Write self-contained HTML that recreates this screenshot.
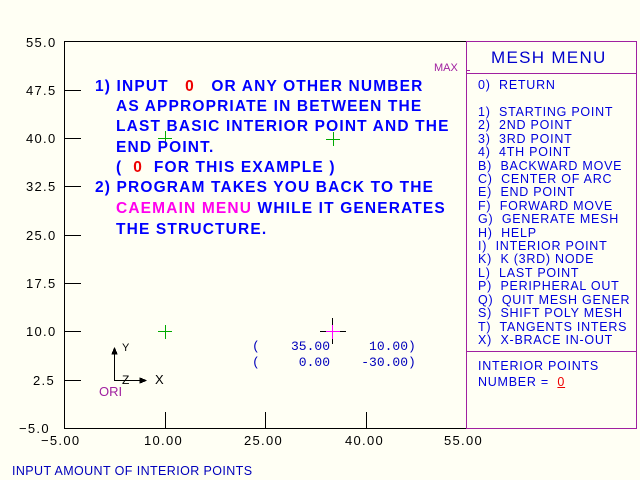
<!DOCTYPE html>
<html><head><style>
html,body{margin:0;padding:0}
body{width:640px;height:480px;background:#fffff4;position:relative;overflow:hidden;font-family:"Liberation Mono",monospace}
.t{position:absolute;white-space:pre;line-height:1}
.ax{font-family:"Liberation Sans",sans-serif;font-size:13px;color:#000;letter-spacing:1.3px}
.ins{font-family:"Liberation Sans",sans-serif;font-weight:bold;font-size:15.5px;color:#0000ff;letter-spacing:1.15px}
.m{font-family:"Liberation Sans",sans-serif;font-size:12.5px;color:#0000dd;letter-spacing:0.75px}
</style></head><body>
<svg width="640" height="480" style="position:absolute;left:0;top:0" shape-rendering="crispEdges">
<rect x="64.5" y="41.5" width="402" height="387" fill="none" stroke="#000" stroke-width="1.3"/>
<rect x="466.5" y="41.5" width="170" height="387" fill="none" stroke="#a020a0" stroke-width="1.3"/>
<line x1="466" y1="73.5" x2="637" y2="73.5" stroke="#a020a0"/>
<line x1="466" y1="351.5" x2="637" y2="351.5" stroke="#a020a0"/>
<g stroke="#000" stroke-width="1">
<line x1="64" y1="90.5" x2="81" y2="90.5"/><line x1="64" y1="138.5" x2="81" y2="138.5"/>
<line x1="64" y1="186.5" x2="81" y2="186.5"/><line x1="64" y1="235.5" x2="81" y2="235.5"/>
<line x1="64" y1="283.5" x2="81" y2="283.5"/><line x1="64" y1="331.5" x2="81" y2="331.5"/>
<line x1="64" y1="380.5" x2="81" y2="380.5"/>
<line x1="165.5" y1="412" x2="165.5" y2="428"/><line x1="265.5" y1="412" x2="265.5" y2="428"/><line x1="366.5" y1="412" x2="366.5" y2="428"/>
</g>
<g stroke="#00aa00"><line x1="158" y1="138.5" x2="172" y2="138.5"/><line x1="165.5" y1="131" x2="165.5" y2="146"/>
<line x1="326" y1="139.5" x2="340" y2="139.5"/><line x1="333.5" y1="132" x2="333.5" y2="146"/></g>
<g stroke="#00aa00"><line x1="158" y1="331.5" x2="172" y2="331.5"/><line x1="165.5" y1="325" x2="165.5" y2="339"/></g>
<g stroke="#000"><line x1="320" y1="331.5" x2="346" y2="331.5"/><line x1="332.5" y1="318" x2="332.5" y2="344"/></g>
<g stroke="#ff00ff"><line x1="326" y1="331.5" x2="340" y2="331.5"/><line x1="332.5" y1="325" x2="332.5" y2="339"/></g>
<g stroke="#000"><line x1="114.5" y1="348" x2="114.5" y2="380"/><line x1="114" y1="380.5" x2="146" y2="380.5"/>
<path d="M112 354 L114.5 348 L117 354 Z M140 378 L146 380.5 L140 383 Z" fill="#000"/></g>
<line x1="466" y1="70.5" x2="470" y2="70.5" stroke="#a020a0"/>
</svg>
<div class="t ax" style="left:26px;top:36px">55.0</div>
<div class="t ax" style="left:26px;top:84px">47.5</div>
<div class="t ax" style="left:26px;top:132px">40.0</div>
<div class="t ax" style="left:26px;top:180px">32.5</div>
<div class="t ax" style="left:26px;top:229px">25.0</div>
<div class="t ax" style="left:26px;top:277px">17.5</div>
<div class="t ax" style="left:26px;top:325px">10.0</div>
<div class="t ax" style="left:33px;top:374px">2.5</div>
<div class="t ax" style="left:19px;top:422px">−5.0</div>
<div class="t ax" style="left:41px;top:434px">−5.00</div>
<div class="t ax" style="left:144px;top:434px">10.00</div>
<div class="t ax" style="left:244px;top:434px">25.00</div>
<div class="t ax" style="left:345px;top:434px">40.00</div>
<div class="t ax" style="left:444px;top:434px">55.00</div>
<div class="t" style="left:434px;top:63px;font-family:'Liberation Sans',sans-serif;font-size:11px;color:#a020a0">MAX</div>
<div class="t ins" style="left:95px;top:79px">1) INPUT   <span style="color:#ee0000">0</span>   OR ANY OTHER NUMBER</div>
<div class="t ins" style="left:116px;top:99px">AS APPROPRIATE IN BETWEEN THE</div>
<div class="t ins" style="left:116px;top:119px">LAST BASIC INTERIOR POINT AND THE</div>
<div class="t ins" style="left:116px;top:140px">END POINT.</div>
<div class="t ins" style="left:116px;top:160px">(  <span style="color:#ee0000">0</span>  FOR THIS EXAMPLE )</div>
<div class="t ins" style="left:95px;top:180px">2) PROGRAM TAKES YOU BACK TO THE</div>
<div class="t ins" style="left:116px;top:201px"><span style="color:#ff00ee">CAEMAIN MENU</span> WHILE IT GENERATES</div>
<div class="t ins" style="left:116px;top:222px">THE STRUCTURE.</div>
<div class="t" style="left:252px;top:340px;font-family:'Liberation Mono',monospace;font-size:13px;color:#0000bb">(    35.00     10.00)</div>
<div class="t" style="left:252px;top:356px;font-family:'Liberation Mono',monospace;font-size:13px;color:#0000bb">(     0.00    -30.00)</div>
<div class="t" style="left:122px;top:343px;font-family:'Liberation Sans',sans-serif;font-size:11px">Y</div>
<div class="t" style="left:122px;top:374px;font-family:'Liberation Sans',sans-serif;font-size:12px">Z</div>
<div class="t" style="left:155px;top:373px;font-family:'Liberation Sans',sans-serif;font-size:13px">X</div>
<div class="t" style="left:99px;top:385px;font-family:'Liberation Sans',sans-serif;font-size:13px;color:#a020a0">ORI</div>
<div class="t" style="left:12px;top:465px;font-family:'Liberation Sans',sans-serif;font-size:12.5px;color:#0000bb;letter-spacing:0.4px">INPUT AMOUNT OF INTERIOR POINTS</div>
<div class="t" style="left:491px;top:49px;font-family:'Liberation Sans',sans-serif;font-size:17px;color:#0000cc;letter-spacing:1.3px">MESH MENU</div>
<div class="t m" style="left:478px;top:79px">0)  RETURN</div>
<div class="t m" style="left:478px;top:106px;line-height:13.4px">1)  STARTING POINT
2)  2ND POINT
3)  3RD POINT
4)  4TH POINT
B)  BACKWARD MOVE
C)  CENTER OF ARC
E)  END POINT
F)  FORWARD MOVE
G)  GENERATE MESH
H)  HELP
I)  INTERIOR POINT
K)  K (3RD) NODE
L)  LAST POINT
P)  PERIPHERAL OUT
Q)  QUIT MESH GENER
S)  SHIFT POLY MESH
T)  TANGENTS INTERS
X)  X-BRACE IN-OUT</div>
<div class="t m" style="left:478px;top:360px">INTERIOR POINTS</div>
<div class="t m" style="left:478px;top:376px">NUMBER =  <span style="color:#ee0000;text-decoration:underline">0</span></div>
</body></html>
